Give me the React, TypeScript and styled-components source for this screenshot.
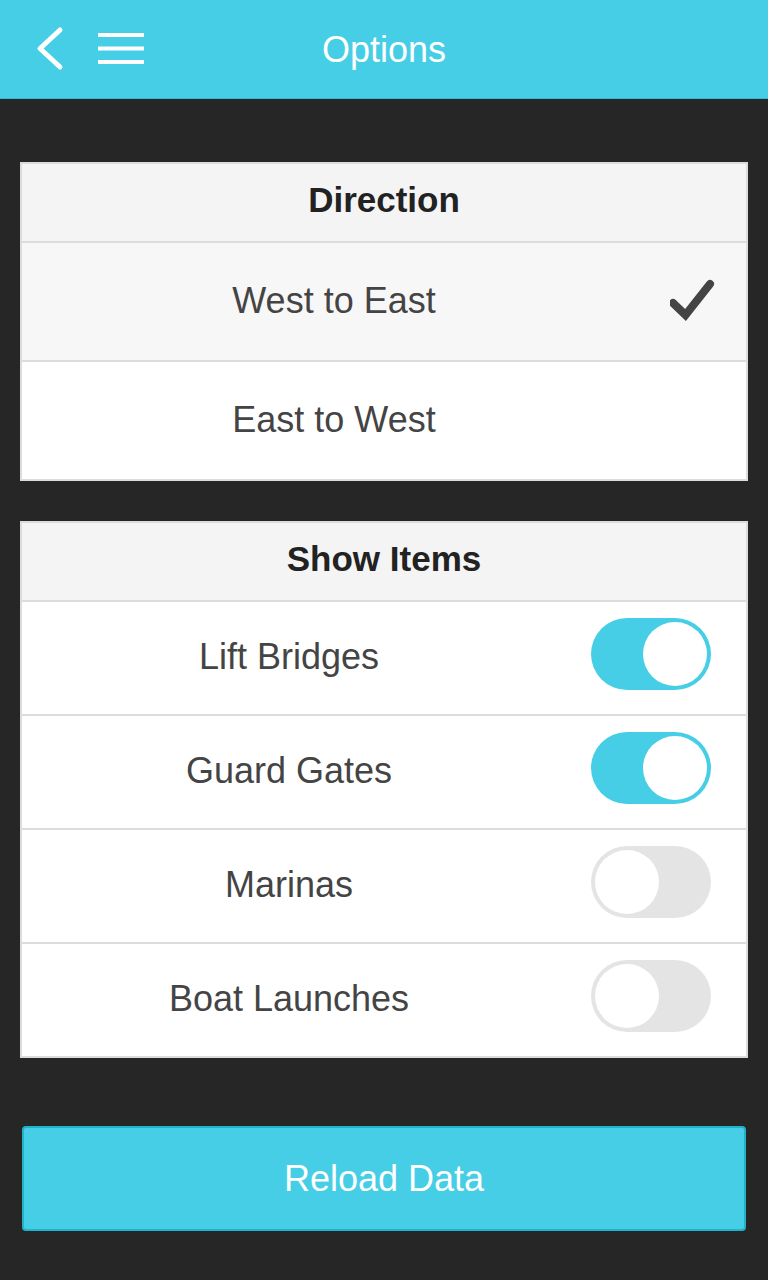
import React from "react";
import styled, { createGlobalStyle } from "styled-components";

const Global = createGlobalStyle`
  html, body {
    margin: 0;
    padding: 0;
    background: #262626;
  }
  body {
    font-family: "Liberation Sans", Arial, sans-serif;
  }
  * { box-sizing: border-box; }
`;

const CYAN = "#45cee5";

const Page = styled.div`
  min-height: 1280px;
  background: #262626;
  display: flex;
  flex-direction: column;
`;

const Header = styled.header`
  height: 99px;
  background: ${CYAN};
  border-bottom: 1px solid #2dbcd3;
  display: grid;
  grid-template-columns: 1fr auto 1fr;
  align-items: center;
`;

const NavIcons = styled.div`
  display: flex;
  align-items: center;
  padding-left: 35px;
  gap: 33px;
`;

const Title = styled.h1`
  margin: 0;
  font-size: 36px;
  font-weight: 400;
  color: #ffffff;
  padding-top: 1px;
`;

const Content = styled.main`
  display: flex;
  flex-direction: column;
  padding: 63px 20px 0;
  gap: 40px;
`;

const Card = styled.section`
  background: #ffffff;
  border: 2px solid #dcdcdc;
  display: flex;
  flex-direction: column;
`;

const CardHeader = styled.div`
  height: 79px;
  border-bottom: 2px solid #dcdcdc;
  background: #f4f4f4;
  display: flex;
  align-items: center;
  justify-content: center;
  font-size: 35px;
  font-weight: 700;
  color: #222222;
  padding-bottom: 6px;
`;

const Row = styled.div<{ $h: number; $selected?: boolean; $last?: boolean }>`
  height: ${(p) => p.$h}px;
  display: flex;
  align-items: center;
  background: ${(p) => (p.$selected ? "#f7f7f7" : "#ffffff")};
  border-bottom: ${(p) => (p.$last ? "none" : "2px solid #dcdcdc")};
`;

const Label = styled.div`
  flex: 1;
  text-align: center;
  font-size: 36px;
  color: #444444;
  padding-bottom: 2px;
`;

const Side = styled.div<{ $w: number; $center?: boolean }>`
  width: ${(p) => p.$w}px;
  display: flex;
  align-items: center;
  justify-content: ${(p) => (p.$center ? "center" : "flex-start")};
  padding-left: ${(p) => (p.$center ? 0 : 24)}px;
  padding-bottom: ${(p) => (p.$center ? 8 : 4)}px;
`;

const Track = styled.div<{ $on: boolean }>`
  width: 120px;
  height: 72px;
  border-radius: 36px;
  padding: 4px;
  background: ${(p) => (p.$on ? CYAN : "#e4e4e4")};
  display: flex;
  justify-content: ${(p) => (p.$on ? "flex-end" : "flex-start")};
`;

const Knob = styled.div`
  width: 64px;
  height: 64px;
  border-radius: 50%;
  background: #ffffff;
`;

const ButtonWrap = styled.div`
  padding: 68px 22px 0;
`;

const ReloadButton = styled.button`
  width: 100%;
  height: 105px;
  background: ${CYAN};
  border: 2px solid #22b3ca;
  border-radius: 4px;
  color: #ffffff;
  font-family: "Liberation Sans", Arial, sans-serif;
  font-size: 36px;
  padding: 0;
`;

const Toggle = ({ on }: { on: boolean }) => (
  <Track $on={on}>
    <Knob />
  </Track>
);

const BackIcon = () => (
  <svg width="30" height="46" viewBox="0 0 30 46">
    <polyline
      points="25,4 5,22.5 25,41"
      fill="none"
      stroke="#fff"
      strokeWidth="5"
      strokeLinecap="round"
      strokeLinejoin="round"
    />
  </svg>
);

const MenuIcon = () => (
  <svg width="46" height="34" viewBox="0 0 46 34">
    <g stroke="#fff" strokeWidth="4" strokeLinecap="butt">
      <line x1="0" y1="3" x2="46" y2="3" />
      <line x1="0" y1="16.5" x2="46" y2="16.5" />
      <line x1="0" y1="30" x2="46" y2="30" />
    </g>
  </svg>
);

const Check = () => (
  <svg width="46" height="42" viewBox="0 0 46 42">
    <polyline
      points="3,24 15.5,36 40,5"
      fill="none"
      stroke="#444"
      strokeWidth="8"
      strokeLinecap="round"
      strokeLinejoin="miter"
    />
  </svg>
);

const items = [
  { name: "Lift Bridges", on: true },
  { name: "Guard Gates", on: true },
  { name: "Marinas", on: false },
  { name: "Boat Launches", on: false },
];

export default function App() {
  return (
    <Page>
      <Global />
      <Header>
        <NavIcons>
          <BackIcon />
          <MenuIcon />
        </NavIcons>
        <Title>Options</Title>
        <div />
      </Header>
      <Content>
        <Card>
          <CardHeader>Direction</CardHeader>
          <Row $h={119} $selected>
            <Label>West to East</Label>
            <Side $w={100}>
              <Check />
            </Side>
          </Row>
          <Row $h={117} $last>
            <Label>East to West</Label>
            <Side $w={100} />
          </Row>
        </Card>
        <Card>
          <CardHeader>Show Items</CardHeader>
          {items.map((it, i) => (
            <Row key={it.name} $h={i === items.length - 1 ? 112 : 114} $last={i === items.length - 1}>
              <Label>{it.name}</Label>
              <Side $w={190} $center>
                <Toggle on={it.on} />
              </Side>
            </Row>
          ))}
        </Card>
      </Content>
      <ButtonWrap>
        <ReloadButton>Reload Data</ReloadButton>
      </ButtonWrap>
    </Page>
  );
}
